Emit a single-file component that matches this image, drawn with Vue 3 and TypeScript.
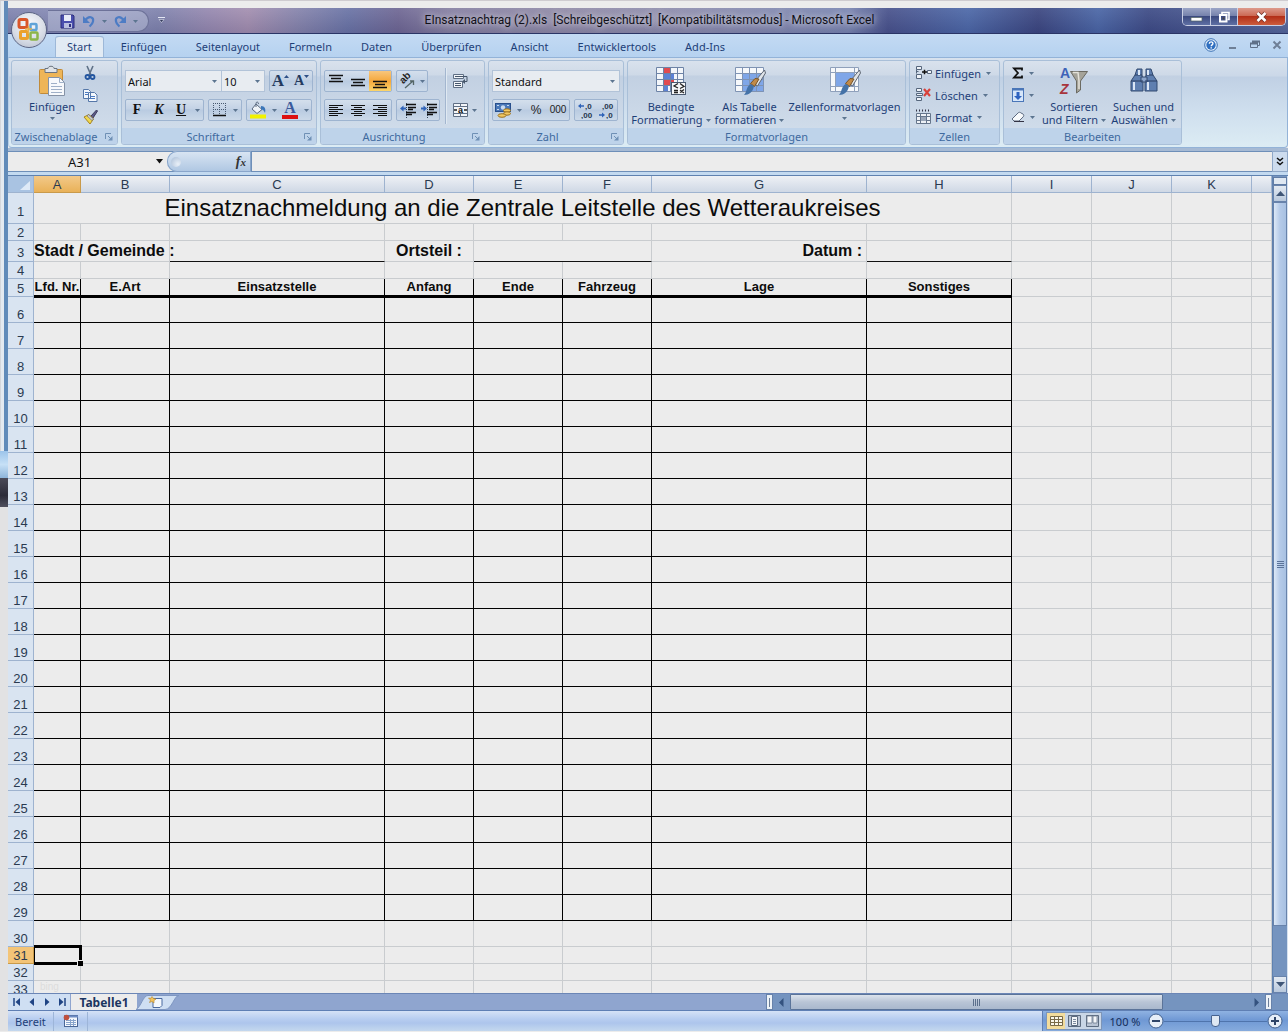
<script setup lang="ts">
import { h, ref } from 'vue'

const Caret = () =>
  h('svg', { class: 'caret', width: 5, height: 3, viewBox: '0 0 5 3', 'aria-hidden': 'true' }, [
    h('path', { d: 'M0 0h5L2.5 3z', fill: '#5c7590' }),
  ])

const Launcher = () =>
  h('svg', { width: 9, height: 9, viewBox: '0 0 9 9', 'aria-hidden': 'true' }, [
    h('path', { d: 'M1.5 7V1.5H7', stroke: '#6f90b5', fill: 'none' }),
    h('path', { d: 'M4 4l3 3', stroke: '#6f90b5', fill: 'none' }),
    h('path', { d: 'M8.500 4v4.500H4z', fill: '#6f90b5' }),
  ])

const tabs = ['Start', 'Einfügen', 'Seitenlayout', 'Formeln', 'Daten', 'Überprüfen', 'Ansicht', 'Entwicklertools', 'Add-Ins']
const activeTab = ref('Start')
const columns = ['A', 'B', 'C', 'D', 'E', 'F', 'G', 'H', 'I', 'J', 'K']
const headings = ['Lfd. Nr.', 'E.Art', 'Einsatzstelle', 'Anfang', 'Ende', 'Fahrzeug', 'Lage', 'Sonstiges']
const formRows = Array.from({ length: 24 }, (_, i) => i + 6)
const fontName = ref('Arial')
const fontSize = ref('10')
const numberFormat = ref('Standard')
const cellName = ref('A31')
const formula = ref('')
const zoom = ref(100)
const aligns = [
  { name: 'oben', path: 'M0 2.500h14M2 5.500h10M0 8.500h14' },
  { name: 'mittig', path: 'M0 6.500h14M2 9.500h10M0 12.500h14' },
  { name: 'unten', path: 'M0 8.500h14M2 11.500h10M0 14.500h14' },
]
</script>

<template>
  <div class="desktop">
    <div class="backdrop">
      <div class="edge"></div>
      <div class="glow"></div>
      <div class="shade"></div>
    </div>
    <div class="window">
      <header class="titlebar">
        <button class="office" aria-label="Office">
          <svg width="26" height="26" viewBox="0 0 26 26">
            <g fill="none" stroke-width="3">
              <rect x="3" y="2.500" width="8" height="8" rx="1.500" stroke="#d9562a" />
              <rect x="14.500" y="7" width="6" height="6" rx="1" stroke="#5fa3d8" stroke-width="2.500" />
              <rect x="4.500" y="14.500" width="7" height="7" rx="1" stroke="#eba12c" />
              <rect x="14.500" y="15.500" width="7" height="7" rx="1" stroke="#8cb54a" stroke-width="2.500" />
              <path d="M9 12h7M12.500 9v8" stroke="#e8b04a" stroke-width="1.500" />
            </g>
          </svg>
        </button>
        <div class="quick">
          <button aria-label="Speichern">
            <svg width="15" height="15" viewBox="0 0 15 15">
              <path d="M1 1h12l1 1v12H1z" fill="#4a4fae" stroke="#2d2f7c" />
              <rect x="4" y="1" width="7" height="6" fill="#e8ecf8" />
              <path d="M4 9h8v5H4z" fill="#b9bfe0" />
              <path d="M9 10h2v3H9z" fill="#2d2f7c" />
            </svg>
          </button>
          <button aria-label="Rückgängig">
            <svg width="14" height="13" viewBox="0 0 14 13">
              <path d="M3 5.500C7 0 12 2 11 6.500 10.500 9 9 10 7.500 11.500" fill="none" stroke="#4d7cc4" stroke-width="2.200" />
              <path d="M1 1v7h7z" fill="#4d7cc4" />
            </svg>
          </button>
          <button class="drop" aria-label="Rückgängig-Liste"><Caret /></button>
          <button aria-label="Wiederholen">
            <svg width="14" height="13" viewBox="0 0 14 13">
              <path d="M11 5.500C7 0 2 2 3 6.500 3.500 9 5 10 6.500 11.500" fill="none" stroke="#4d7cc4" stroke-width="2.200" />
              <path d="M13 1v7H6z" fill="#4d7cc4" />
            </svg>
          </button>
          <button class="drop" aria-label="Wiederholen-Liste"><Caret /></button>
        </div>
        <button class="customize" aria-label="Symbolleiste anpassen">
          <svg width="7" height="6" viewBox="0 0 7 6"><path d="M0 .5h7" stroke="#e4e8f4" /><path d="M1 2.500h5L3.500 5.500z" fill="#333a5c" stroke="#e4e8f4" stroke-width=".6" /></svg>
        </button>
        <h1 class="caption">EInsatznachtrag (2).xls&nbsp; [Schreibgeschützt]&nbsp; [Kompatibilitätsmodus] - Microsoft Excel</h1>
        <div class="winbuttons">
          <button class="min" aria-label="Minimieren">
            <svg width="13" height="12" viewBox="0 0 13 12"><rect x="1" y="6.500" width="11" height="3.500" fill="#fff" stroke="#566" stroke-width=".7" /></svg>
          </button>
          <button class="max" aria-label="Wiederherstellen">
            <svg width="13" height="12" viewBox="0 0 13 12"><path d="M4 3V1.500h7v7H9.500" fill="none" stroke="#fff" stroke-width="1.600" /><rect x="2" y="4" width="6.500" height="6.500" fill="none" stroke="#fff" stroke-width="2" /><rect x="4.500" y="6.500" width="2" height="2" fill="#444" /></svg>
          </button>
          <button class="close" aria-label="Schließen">
            <svg width="13" height="12" viewBox="0 0 13 12"><path d="M2.500 2l8 8M10.500 2l-8 8" stroke="#703028" stroke-width="4" /><path d="M2.500 2l8 8M10.500 2l-8 8" stroke="#fff" stroke-width="2.600" /></svg>
          </button>
        </div>
      </header>

      <nav class="tabs">
        <button v-for="t in tabs" :key="t" class="tab" :class="{ active: t === activeTab }" @click="activeTab = t">{{ t }}</button>
        <div class="docbuttons">
          <button aria-label="Hilfe">
            <svg width="14" height="14" viewBox="0 0 14 14"><circle cx="7" cy="7" r="6.300" fill="#e6f1fb" stroke="#3a70b4" /><circle cx="7" cy="7" r="4.700" fill="#2f6fc0" /><path d="M5.300 5.700C5.300 3.300 8.900 3.300 8.900 5.500 8.900 6.900 7.200 6.800 7.200 8.300M7.200 9.300v1.300" fill="none" stroke="#fff" stroke-width="1.400" /></svg>
          </button>
          <button aria-label="Mappe minimieren">
            <svg width="10" height="10" viewBox="0 0 10 10"><path d="M1 8h7" stroke="#6f7f96" stroke-width="2" /></svg>
          </button>
          <button aria-label="Mappe wiederherstellen">
            <svg width="10" height="10" viewBox="0 0 10 10"><path d="M2.500 4V1.500h7v4H8M.5 3.500h7v4h-7z" fill="none" stroke="#5f7088" /><path d="M0 3.500h8M2 1.500h8" stroke="#5f7088" stroke-width="2" /></svg>
          </button>
          <button aria-label="Mappe schließen">
            <svg width="10" height="10" viewBox="0 0 10 10"><path d="M1.500 1.500l7 7M8.500 1.500l-7 7" stroke="#6f7f96" stroke-width="2" /></svg>
          </button>
        </div>
      </nav>

      <section class="ribbon">
        <div class="group clip">
          <div class="body">
            <button class="big">
              <svg width="30" height="32" viewBox="0 0 30 32">
                <rect x="2.500" y="4.500" width="23" height="24" rx="1" fill="#eeb557" stroke="#c08a3a" />
                <path d="M8 3.500h3C11 .5 17 .5 17 3.500h3v4H8z" fill="#dfe3e8" stroke="#6b7480" />
                <path d="M11.500 12.500h11l5 5v13h-16z" fill="#f7f9fc" stroke="#8592a6" />
                <path d="M22.500 12.500v5h5M14 18.500h6M14 21.500h11M14 24.500h11M14 27.500h11" stroke="#9fb0c8" fill="none" />
              </svg>
              <span>Einfügen</span><Caret />
            </button>
            <div class="stack icons">
              <button aria-label="Ausschneiden"><svg width="16" height="16" viewBox="0 0 16 16"><path d="M5 1l4 9M11 1L7 10" stroke="#5f7187" stroke-width="1.600" /><circle cx="5.500" cy="12" r="2" fill="none" stroke="#23559f" stroke-width="1.800" /><circle cx="10.500" cy="12" r="2" fill="none" stroke="#23559f" stroke-width="1.800" /></svg></button>
              <button aria-label="Kopieren"><svg width="16" height="16" viewBox="0 0 16 16"><path d="M1.500 2.500h5l2 2v7h-7zM6.500 5.500h6l2.500 2.500v6.500H6.500z" fill="#f4f8fd" stroke="#5577a8" /><path d="M3 5.500h3M3 7.500h3M8 9.500h5M8 11.500h5" stroke="#4d7bc0" /></svg></button>
              <button aria-label="Format übertragen"><svg width="16" height="16" viewBox="0 0 16 16"><path d="M9 7l5.500-6 1 1L11 9z" fill="#5d5a86" stroke="#3b3a5c" /><path d="M2 8l5-2.500L11.500 10 8 15z" fill="#f0d84e" stroke="#a88420" /><path d="M6.500 5.500l5 4.500-1.500 1.500L5 7z" fill="#c9ccd6" stroke="#666" stroke-width=".6" /></svg></button>
            </div>
          </div>
          <footer><span>Zwischenablage</span><button class="launch" aria-label="Zwischenablage öffnen"><Launcher /></button></footer>
        </div>

        <div class="group font">
          <div class="body rows">
            <div class="line">
              <div class="combo-set">
                <label class="combo name"><select v-model="fontName" aria-label="Schriftart"><option>Arial</option></select><Caret /></label>
                <label class="combo size"><select v-model="fontSize" aria-label="Schriftgrad"><option>10</option></select><Caret /></label>
              </div>
              <div class="set">
                <button class="w21 serif grow" aria-label="Schriftart vergrößern">A<svg width="5" height="3" viewBox="0 0 5 3"><path d="M0 3h5L2.500 0z" fill="#2d4f86" /></svg></button>
                <button class="w21 serif shrink" aria-label="Schriftart verkleinern">A<svg width="5" height="3" viewBox="0 0 5 3"><path d="M0 0h5L2.500 3z" fill="#2d4f86" /></svg></button>
              </div>
            </div>
            <div class="line">
              <div class="set">
                <button class="w22 serif">F</button>
                <button class="w22 serif italic">K</button>
                <button class="w22 serif under">U</button>
                <button class="w11" aria-label="Unterstreichungsart"><Caret /></button>
              </div>
              <div class="set">
                <button class="w21" aria-label="Rahmen"><svg width="14" height="14" viewBox="0 0 14 14"><path d="M.5 0v13M6.500 0v13M12.500 0v13M0 .5h13M0 6.500h13" stroke="#47586f" stroke-dasharray="1 1" /><path d="M0 12.500h13" stroke="#111" stroke-width="1.500" /></svg></button>
                <button class="w11" aria-label="Rahmenart"><Caret /></button>
              </div>
              <div class="set">
                <button class="w22" aria-label="Füllfarbe"><svg width="18" height="18" viewBox="0 0 18 18"><path d="M7 3l6 5.500-5 4-5-4.500z" fill="#eef3f8" stroke="#5a6a80" /><path d="M7 6V2.500C7 .5 9.500.5 9.500 3" fill="none" stroke="#5a6a80" /><path d="M12 5c4 0 5 3 4 7-1-2-1.500-3.500-4-3.500z" fill="#3b76b8" /><rect x="1" y="13.500" width="16" height="4" fill="#f2f200" /></svg></button>
                <button class="w10" aria-label="Füllfarben"><Caret /></button>
                <button class="w22 fontcolor" aria-label="Schriftfarbe"><span>A</span><i></i></button>
                <button class="w10" aria-label="Schriftfarben"><Caret /></button>
              </div>
            </div>
          </div>
          <footer><span>Schriftart</span><button class="launch" aria-label="Schriftart öffnen"><Launcher /></button></footer>
        </div>

        <div class="group align">
          <div class="body">
            <div class="rows">
              <div class="line">
                <div class="set">
                  <button v-for="a in aligns" :key="a.name" class="w22" :class="{ on: a.name === 'unten' }" :aria-label="a.name">
                    <svg width="14" height="16" viewBox="0 0 14 16"><path :d="a.path" stroke="#111" stroke-width="1.400" /></svg>
                  </button>
                </div>
                <div class="set">
                  <button class="w20" aria-label="Ausrichtung"><svg width="18" height="18" viewBox="0 0 18 18"><text x="3" y="9" font-size="10" font-weight="bold" font-family="Liberation Sans, sans-serif" transform="rotate(-45 8 8)" fill="#222">ab</text><path d="M7 16l8-7M15.500 13V9H12" fill="none" stroke="#566" stroke-width="1.300" /></svg></button>
                  <button class="w10" aria-label="Ausrichtungsliste"><Caret /></button>
                </div>
              </div>
              <div class="line">
                <div class="set">
                  <button class="w22" aria-label="Linksbündig"><svg width="15" height="13" viewBox="0 0 15 13"><path d="M0 1.500h14M0 3.500h9M0 5.500h14M0 7.500h9M0 9.500h14M0 11.500h9" stroke="#111" /></svg></button>
                  <button class="w22" aria-label="Zentriert"><svg width="15" height="13" viewBox="0 0 15 13"><path d="M0 1.500h14M3 3.500h8M0 5.500h14M3 7.500h8M0 9.500h14M3 11.500h8" stroke="#111" /></svg></button>
                  <button class="w22" aria-label="Rechtsbündig"><svg width="15" height="13" viewBox="0 0 15 13"><path d="M0 1.500h14M5 3.500h9M0 5.500h14M5 7.500h9M0 9.500h14M5 11.500h9" stroke="#111" /></svg></button>
                </div>
                <div class="set">
                  <button class="w21" aria-label="Einzug verkleinern"><svg width="16" height="15" viewBox="0 0 16 15"><path d="M6 1.500h10M8 4.500h8M8 6.500h5M6 9.500h10M6 11.500h6" stroke="#111" stroke-width="1.600" /><path d="M6.500 0v15" stroke="#345" stroke-dasharray="1 1" /><path d="M0 5.500L3.500 2.500v2H6v2H3.500v2z" fill="#2f63b8" /></svg></button>
                  <button class="w21" aria-label="Einzug vergrößern"><svg width="16" height="15" viewBox="0 0 16 15"><path d="M6 1.500h10M8 4.500h8M8 6.500h5M6 9.500h10M6 11.500h6" stroke="#111" stroke-width="1.600" /><path d="M6.500 0v15" stroke="#345" stroke-dasharray="1 1" /><path d="M6 5.500L2.500 2.500v2H0v2h2.500v2z" fill="#2f63b8" /></svg></button>
                </div>
              </div>
            </div>
            <div class="divider"></div>
            <div class="rows">
              <button class="flat" aria-label="Zeilenumbruch"><svg width="17" height="16" viewBox="0 0 17 16"><path d="M1.500 1.500h10v4h-10zM1.500 8.500h9v6h-9z" fill="#f2f5f9" stroke="#5f6f85" /><path d="M3 3.500h12v5h-3M3 10.500h6M3 12.500h6" fill="none" stroke="#46566b" /><path d="M13 6l-3 2.500 3 2.500z" fill="#46566b" /></svg></button>
              <button class="flat" aria-label="Verbinden und zentrieren"><svg width="17" height="16" viewBox="0 0 17 16"><path d="M1.500 1.500h14v13h-14zM1.500 4.500h14M1.500 11.500h14M8.500 1v3M8.500 12v3" fill="#f2f5f9" stroke="#5f6f85" /><text x="6" y="10.500" font-size="9" font-weight="bold" font-family="Liberation Sans, sans-serif" fill="#111">a</text><path d="M2 8h3M12 8h3" stroke="#222" stroke-width="1.500" /></svg><Caret /></button>
            </div>
          </div>
          <footer><span>Ausrichtung</span><button class="launch" aria-label="Ausrichtung öffnen"><Launcher /></button></footer>
        </div>

        <div class="group number">
          <div class="body rows">
            <label class="combo format"><select v-model="numberFormat" aria-label="Zahlenformat"><option>Standard</option></select><Caret /></label>
            <div class="line">
              <div class="set">
                <button class="w21" aria-label="Buchhaltungsformat"><svg width="17" height="17" viewBox="0 0 17 17"><rect x=".5" y="1.500" width="15" height="8" fill="#4a78b8" stroke="#284f8c" /><circle cx="8" cy="5.500" r="2.200" fill="#c8daf0" /><path d="M2 3.500h2M12 3.500h2M2 7.500h2" stroke="#c8daf0" /><ellipse cx="12" cy="8.500" rx="3.500" ry="1.700" fill="#f2c862" stroke="#9a7224" /><ellipse cx="12" cy="11.500" rx="3.500" ry="1.700" fill="#f2c862" stroke="#9a7224" /><ellipse cx="7" cy="13.500" rx="4" ry="1.800" fill="#f2c862" stroke="#9a7224" /></svg></button>
                <button class="w11" aria-label="Währungen"><Caret /></button>
                <button class="w22 sym">%</button>
                <button class="w22 sym zeros">000</button>
              </div>
              <div class="set">
                <button class="w21" aria-label="Dezimalstelle hinzufügen"><svg width="17" height="18" viewBox="0 0 17 18"><text x="8" y="8" font-size="8" font-weight="bold" font-family="Liberation Sans, sans-serif" fill="#26364c">,0</text><text x="4" y="17" font-size="8" font-weight="bold" font-family="Liberation Sans, sans-serif" fill="#26364c">,00</text><path d="M1 5L4 2.500v1.800h3v1.500H4v1.700z" fill="#2f63b8" /></svg></button>
                <button class="w21" aria-label="Dezimalstelle löschen"><svg width="17" height="18" viewBox="0 0 17 18"><text x="4" y="8" font-size="8" font-weight="bold" font-family="Liberation Sans, sans-serif" fill="#26364c">,00</text><text x="8" y="17" font-size="8" font-weight="bold" font-family="Liberation Sans, sans-serif" fill="#26364c">,0</text><path d="M7 14l-3-2.500v1.800H1v1.500h3v1.700z" fill="#2f63b8" /></svg></button>
              </div>
            </div>
          </div>
          <footer><span>Zahl</span><button class="launch" aria-label="Zahl öffnen"><Launcher /></button></footer>
        </div>

        <div class="group styles">
          <div class="body">
            <button class="big cond">
              <svg width="30" height="32" viewBox="0 0 30 32">
                <path d="M.5 2.500h27v24H.5z" fill="#f3f6fa" />
                <path d="M7 2h7v6H7zM7 14h11v6H7z" fill="#e04a50" /><path d="M7 8h11v6H7zM7 20h5v6H7z" fill="#5b82d6" />
                <path d="M.5 2.500h27v24H.5zM.5 8.500h27M.5 14.500h27M.5 20.500h27M7.500 2v24M14.500 2v24M21.500 2v24" fill="none" stroke="#6d83a6" />
                <rect x="15.500" y="17.500" width="14" height="12" fill="#f7f8fa" stroke="#4b5a70" />
                <path d="M22 18.500l-4 2.500 4 2M18 25.500h4M18 27.500h4M24 18.500l4 3-4 2M24 25l4 3M28 24.500l-4 3" fill="none" stroke="#222" stroke-width="1.300" />
              </svg>
              <span>Bedingte</span><span>Formatierung <Caret /></span>
            </button>
            <button class="big tbl">
              <svg width="32" height="32" viewBox="0 0 32 32">
                <path d="M1.500 2.500h28v24h-28z" fill="#f6f8fb" /><path d="M8 8h22v19H8z" fill="#7fa6e8" />
                <path d="M1.500 2.500h28v24h-28zM1.500 8.500h28M1.500 14.500h28M1.500 20.500h28M8.500 2v24M15.500 2v24M22.500 2v24" fill="none" stroke="#7f93b3" />
                <path d="M30.500 5l1 3-8 13-4-3z" fill="#dfe3e8" stroke="#5e6672" /><path d="M25 14l-4.500 7.500-4-3 4.500-5z" fill="#c08a4a" stroke="#7a5426" /><path d="M20 21c-1 6-5 9-10 9 3-3 2-8 6.500-11z" fill="#4472a8" />
              </svg>
              <span>Als Tabelle</span><span>formatieren <Caret /></span>
            </button>
            <button class="big cell">
              <svg width="32" height="32" viewBox="0 0 32 32">
                <path d="M1.500 2.500h28v24h-28z" fill="#f6f8fb" /><path d="M6 7h19v15H6z" fill="#7fa6e8" />
                <path d="M1.500 2.500h28v24h-28zM1.500 7.500h28M1.500 21.500h28M6.500 2v24M25.500 2v24" fill="none" stroke="#8fa0bb" />
                <path d="M30.500 5l1 3-8 13-4-3z" fill="#dfe3e8" stroke="#5e6672" /><path d="M25 14l-4.500 7.500-4-3 4.500-5z" fill="#c08a4a" stroke="#7a5426" /><path d="M20 21c-1 6-5 9-10 9 3-3 2-8 6.500-11z" fill="#4472a8" />
              </svg>
              <span>Zellenformatvorlagen</span><Caret />
            </button>
          </div>
          <footer><span>Formatvorlagen</span></footer>
        </div>

        <div class="group cells">
          <div class="body">
            <div class="stack">
              <button class="entry"><svg width="17" height="16" viewBox="0 0 17 16"><path d="M1.500 1.500h5v3h-5zM1.500 4.500v4M1.500 9.500h5v4h-5zM1.500 6.500h2M12.500 5.500h4v3h-4z" fill="#f0f3f8" stroke="#56667c" /><path d="M7 7h5M9.500 4.800v4.400" stroke="#111" stroke-width="1.500" /></svg>Einfügen<Caret /></button>
              <button class="entry"><svg width="17" height="16" viewBox="0 0 17 16"><path d="M1.500 1.500h5v3h-5zM1.500 10.500h5v3h-5zM1.500 6.500h6v2h-6z" fill="#f0f3f8" stroke="#56667c" /><path d="M9 2l6 7M15 2L9 9" stroke="#d8413a" stroke-width="2.200" /></svg>Löschen<Caret /></button>
              <button class="entry"><svg width="17" height="16" viewBox="0 0 17 16"><path d="M1.500 4.500h14v10h-14zM1.500 7.500h14M1.500 11.500h14M5.500 4v10M11.500 4v10" fill="#eef1f6" stroke="#66768c" /><path d="M6 8h5v4H6z" fill="#9aa6b8" /><path d="M1 1.500h15" stroke="#334" stroke-width="2" stroke-dasharray="1 2" /></svg>Format<Caret /></button>
            </div>
          </div>
          <footer><span>Zellen</span></footer>
        </div>

        <div class="group edit">
          <div class="body">
            <div class="stack">
              <button class="entry" aria-label="Summe"><svg width="14" height="14" viewBox="0 0 14 14"><path d="M11 4.500V2.500H3l4 4.500-4 4.500h8v-2" fill="none" stroke="#111" stroke-width="1.800" /></svg><Caret /></button>
              <button class="entry" aria-label="Füllbereich"><svg width="14" height="16" viewBox="0 0 14 16"><rect x="1.500" y="1.500" width="11" height="13" fill="#d6e6fa" stroke="#4a76b8" /><path d="M1 2.500h12" stroke="#4a76b8" stroke-width="2" /><path d="M7 13L3 9h2.500V5h3v4H11z" fill="#2f63c0" /></svg><Caret /></button>
              <button class="entry" aria-label="Löschen"><svg width="15" height="14" viewBox="0 0 15 14"><path d="M1 9l6-6c1-1 2-1 3 0l2 1c1 1 1 2 0 3l-4 4H3z" fill="#f8fafc" stroke="#5c6a80" /><path d="M3 11.500h10" stroke="#334" /></svg><Caret /></button>
            </div>
            <button class="big sort">
              <svg width="32" height="32" viewBox="0 0 32 32">
                <text x="2" y="13" font-size="14" font-weight="bold" font-family="Liberation Sans, sans-serif" fill="#3f63b8">A</text>
                <text x="2" y="29" font-size="14" font-weight="bold" font-style="italic" font-family="Liberation Sans, sans-serif" fill="#a8353c">Z</text>
                <path d="M12.500 6.500h17l-7 9.500v9l-4 3V16z" fill="#a5a399" stroke="#6b6a62" /><path d="M15 7.500h5l1 8.500v8" fill="none" stroke="#e4e2da" stroke-width="1.500" />
              </svg>
              <span>Sortieren</span><span>und Filtern <Caret /></span>
            </button>
            <button class="big find">
              <svg width="30" height="32" viewBox="0 0 30 32">
                <path d="M8 4h5v6l1 5v11H2V16l4-6zM17 4h5l2 6 4 6v10H16V15l1-5z" fill="#5f7fb0" stroke="#334a70" />
                <path d="M12 12h6v5h-6z" fill="#8ba4cb" stroke="#334a70" /><path d="M2 16h12M16 16h12M6 10h7M17 10h7" stroke="#2b3f63" /><path d="M5 17v8M19 17v8M10 5v5M19 5v5" stroke="#dbe6f5" stroke-width="2" />
              </svg>
              <span>Suchen und</span><span>Auswählen <Caret /></span>
            </button>
          </div>
          <footer><span>Bearbeiten</span></footer>
        </div>
      </section>

      <div class="formulabar">
        <input v-model="cellName" class="namebox" aria-label="Namenfeld" />
        <button class="namedrop" aria-label="Namen"><svg width="7" height="5" viewBox="0 0 7 5"><path d="M0 0h7L3.500 4.500z" fill="#111" /></svg></button>
        <div class="fx"><span class="knob"></span><button aria-label="Funktion einfügen"><i>f</i><sub>x</sub></button></div>
        <input v-model="formula" class="formula" aria-label="Bearbeitungsleiste" />
        <button class="expand" aria-label="Bearbeitungsleiste erweitern"><svg width="8" height="9" viewBox="0 0 8 9"><path d="M1 1l3 2.500L7 1M1 5l3 2.500L7 5" fill="none" stroke="#111" stroke-width="1.500" /></svg></button>
      </div>

      <main class="workspace">
        <div class="sheet">
          <table>
            <colgroup>
              <col class="c-row" /><col class="c-a" /><col class="c-s" /><col class="c-l" /><col class="c-s" /><col class="c-s" /><col class="c-s" /><col class="c-l" /><col class="c-h" /><col class="c-x" /><col class="c-x" /><col class="c-x" /><col />
            </colgroup>
            <thead>
              <tr>
                <th class="corner"><svg width="10" height="9" viewBox="0 0 10 9"><path d="M10 0v9H0z" fill="#dfeaf7" /></svg></th>
                <th v-for="c in columns" :key="c" :class="{ sel: c === 'A' }">{{ c }}</th>
                <th></th>
              </tr>
            </thead>
            <tbody>
              <tr class="r31"><th>1</th><td colspan="8" class="title">Einsatznachmeldung an die Zentrale Leitstelle des Wetteraukreises</td><td v-for="n in 4" :key="n"></td></tr>
              <tr class="r17"><th>2</th><td v-for="n in 12" :key="n"></td></tr>
              <tr class="r21">
                <th>3</th>
                <td colspan="2" class="field">Stadt / Gemeinde :</td><td class="fill"></td>
                <td class="field mid">Ortsteil :</td><td colspan="2" class="fill"></td>
                <td class="field date">Datum :</td><td class="fill"></td>
                <td v-for="n in 4" :key="n"></td>
              </tr>
              <tr class="r17"><th>4</th><td v-for="n in 12" :key="n"></td></tr>
              <tr class="r18"><th>5</th><td v-for="t in headings" :key="t" class="heading">{{ t }}</td><td v-for="n in 4" :key="n"></td></tr>
              <tr v-for="r in formRows" :key="r" class="r26" :class="{ first: r === 6 }">
                <th>{{ r }}</th><td v-for="n in 8" :key="n" class="box"></td><td v-for="n in 4" :key="n + 8"></td>
              </tr>
              <tr class="r26"><th>30</th><td v-for="n in 12" :key="n"></td></tr>
              <tr class="r17"><th class="sel">31</th><td class="cursor"><i></i></td><td v-for="n in 11" :key="n"></td></tr>
              <tr class="r17"><th>32</th><td v-for="n in 12" :key="n"></td></tr>
              <tr class="r17"><th>33</th><td class="mark">bing</td><td v-for="n in 11" :key="n"></td></tr>
            </tbody>
          </table>
        </div>
        <div class="vscroll">
          <div class="split"></div>
          <button class="arrow" aria-label="Nach oben"><svg width="9" height="5" viewBox="0 0 9 5"><path d="M0 5h9L4.500 0z" fill="#3f5677" /></svg></button>
          <div class="thumb"><i></i><i></i><i></i><i></i></div>
          <div class="rest"></div>
          <button class="arrow" aria-label="Nach unten"><svg width="9" height="5" viewBox="0 0 9 5"><path d="M0 0h9L4.500 5z" fill="#3f5677" /></svg></button>
        </div>
      </main>

      <div class="sheetbar">
        <div class="navs">
          <button aria-label="Erstes Blatt"><svg width="8" height="8" viewBox="0 0 8 8"><path d="M1 0v8" stroke="#1f4484" stroke-width="1.500" /><path d="M7 0v8L2.500 4z" fill="#1f4484" /></svg></button>
          <button aria-label="Vorheriges Blatt"><svg width="8" height="8" viewBox="0 0 8 8"><path d="M6 0v8L1.500 4z" fill="#1f4484" /></svg></button>
          <button aria-label="Nächstes Blatt"><svg width="8" height="8" viewBox="0 0 8 8"><path d="M2 0v8l4.500-4z" fill="#1f4484" /></svg></button>
          <button aria-label="Letztes Blatt"><svg width="8" height="8" viewBox="0 0 8 8"><path d="M7 0v8" stroke="#1f4484" stroke-width="1.500" /><path d="M1 0v8l4.500-4z" fill="#1f4484" /></svg></button>
        </div>
        <button class="sheettab">Tabelle1</button>
        <button class="newtab" aria-label="Tabellenblatt einfügen">
          <svg width="46" height="15" viewBox="0 0 46 15"><path d="M1 14.500C6 12 8 .5 13 .5h31C39 .5 37 14.500 30 14.500z" fill="#cfdff3" stroke="#7f97c2" /><path d="M18 3.500h9v7l-2 2h-7z" fill="#f4f8fd" stroke="#49699f" /><path d="M17 1.500l1.500 2 2.500.5-2 1.500v2.500L17 6.500 14.500 7.500l1-2.500L13.500 3l2.500.3z" fill="#f2c25a" stroke="#b4842c" stroke-width=".6" /></svg>
        </button>
        <span class="gap"></span>
        <div class="hscroll">
          <i class="splitter"></i>
          <button aria-label="Nach links"><svg width="5" height="9" viewBox="0 0 5 9"><path d="M4.500 0v9L0 4.500z" fill="#34527f" /></svg></button>
          <div class="hthumb"><i></i><i></i><i></i><i></i></div>
          <span class="htrack"></span>
          <button aria-label="Nach rechts"><svg width="5" height="9" viewBox="0 0 5 9"><path d="M.5 0v9L5 4.500z" fill="#34527f" /></svg></button>
          <i class="splitter"></i>
        </div>
      </div>

      <footer class="status">
        <span class="ready">Bereit</span>
        <button class="macro" aria-label="Makro aufzeichnen"><svg width="16" height="14" viewBox="0 0 16 14"><rect x="1.500" y="1.500" width="13" height="11" fill="#f5f8fc" stroke="#4a6696" /><path d="M1 2.500h14" stroke="#6d8cc4" stroke-width="2" /><path d="M3 6.500h10M3 8.500h10M3 10.500h10M7.500 5v7M10.500 5v7" stroke="#88a4cc" /><circle cx="3.500" cy="3.500" r="2.800" fill="#c0503e" /></svg></button>
        <span class="gap"></span>
        <div class="controls">
          <div class="views">
            <button class="on" aria-label="Normal"><svg width="15" height="12" viewBox="0 0 15 12"><path d="M1.500 1.500h12v9h-12zM1 4.500h13M1 7.500h13M5.500 1v10M9.500 1v10" fill="#fbf8ec" stroke="#7a6b48" /></svg></button>
            <button aria-label="Seitenlayout"><svg width="13" height="12" viewBox="0 0 13 12"><path d="M.5.5h12v11H.5z" fill="#b9c4d4" stroke="#5c6b80" /><path d="M3.500 1.500h6v9h-6z" fill="#f4f6f9" stroke="#5c6b80" /><path d="M5 4.500h3M5 6.500h3M5 8.500h3" stroke="#7c8a9e" /></svg></button>
            <button aria-label="Umbruchvorschau"><svg width="13" height="12" viewBox="0 0 13 12"><path d="M.5.5h12v11H.5z" fill="#b9c4d4" stroke="#5c6b80" /><path d="M1 1h5v7H1zM7 1h4v7H7z" fill="#f4f6f9" stroke="#6c7b90" stroke-width=".8" /></svg></button>
          </div>
          <button class="percent">{{ zoom }} %</button>
          <button class="round" aria-label="Verkleinern"><svg width="16" height="16" viewBox="0 0 16 16"><circle cx="8" cy="8" r="7" fill="#e6eef8" stroke="#3f5f8e" /><path d="M4 8h8" stroke="#2e4468" stroke-width="2" /></svg></button>
          <input v-model.number="zoom" type="range" min="10" max="190" aria-label="Zoom" />
          <button class="round" aria-label="Vergrößern"><svg width="16" height="16" viewBox="0 0 16 16"><circle cx="8" cy="8" r="7" fill="#e6eef8" stroke="#3f5f8e" /><path d="M4 8h8M8 4v8" stroke="#2e4468" stroke-width="2" /></svg></button>
        </div>
      </footer>
    </div>
  </div>
</template>

<style>
body { background: #ececec; }
</style>

<style scoped>
* { box-sizing: border-box; }
.desktop {
  display: flex;
  height: 100vh;
  padding: 0 0 1px;
  overflow: hidden;
  background: #ececec;
  font: 11px/13px "Noto Sans", "Open Sans", sans-serif;
  color: #1e3f78;
  border-top: 1px solid #cfccd0;
}
button, select, input { font: inherit; color: inherit; margin: 0; padding: 0; border: 0; background: none; border-radius: 0; outline: 0; }
button { display: flex; align-items: center; justify-content: center; white-space: nowrap; }
svg { flex: none; display: block; }
.backdrop { flex: 0 0 8px; display: flex; flex-direction: column; background: #e2e2e3; }
.edge { flex: 0 0 450px; background: linear-gradient(90deg, #d4d6da 0 1px, #e4eaf0 1px 4px, #618bb9 4px); }
.glow { flex: 0 0 27px; background: linear-gradient(#9cc4ea, #c6e0f6, #8db4da); }
.shade { flex: 0 0 29px; background: linear-gradient(#4a4a58, #2c2c3a 60%, #50505e); }
.window { flex: 1; min-width: 0; display: flex; flex-direction: column; padding-top: 7px; }

.titlebar {
  position: relative;
  flex: 0 0 26px;
  display: flex;
  align-items: flex-start;
  border-bottom: 1px solid #2a3566;
  background:
    linear-gradient(180deg, rgba(255, 255, 255, .08), rgba(20, 20, 60, .12)),
    linear-gradient(90deg, #8085b0 0, #8c90ba 90px, #8084ae 150px, #9689b0 200px, #a48fb0 240px, #8684ac 290px, #6a74a6 340px, #6f6794 390px, #8680a2 440px, #918ba8 560px, #8d8dae 680px, #7a86b2 840px, #48528c 880px, #4c68a8 960px, #3b4680 1030px, #4a66a6 1090px, #3d4b86 1140px, #56689c);
}
.office {
  position: absolute; left: 3px; top: 4px; width: 36px; height: 36px; border-radius: 50%;
  background: radial-gradient(circle at 50% 35%, #fafbfd, #d5dae4 60%, #b0b8ca); border: 1px solid #5d6685; z-index: 2;
}
.quick { display: flex; align-items: center; height: 22px; margin: 2px 0 0 40px; padding-left: 10px; width: 101px; border: 1px solid #6d7299; border-left: 0; border-radius: 0 12px 12px 0; background: rgba(196, 202, 224, .45); }
.quick button { width: 18px; }
.quick button:first-child { margin-right: 4px; }
.quick .drop { width: 13px; }
.customize { width: 24px; height: 24px; }
.caption { flex: 1; margin: 0 56px 0 0; font: 12px/25px Roboto, "Noto Sans", sans-serif; text-align: center; color: #101018; white-space: nowrap; text-shadow: 0 0 6px rgba(255, 255, 255, .7), 0 0 10px rgba(255, 255, 255, .5); }
.winbuttons { display: flex; height: 18px; margin-right: 2px; border: 1px solid #c9cfe4; border-top: 0; border-radius: 0 0 5px 5px; overflow: hidden; }
.winbuttons button { background: linear-gradient(#9ba5c6, #7682ac 45%, #3c4a80 50%, #5f70a4); }
.min { width: 28px; border-right: 1px solid #c9cfe4; }
.max { width: 27px; border-right: 1px solid #c9cfe4; }
.winbuttons .close { width: 47px; background: linear-gradient(#dd9a8c, #cc6a55 45%, #b32f18 50%, #cc5c3c); }

.tabs { flex: 0 0 23px; display: flex; align-items: flex-end; gap: 5px; padding-left: 47px; background: linear-gradient(#c3daf3, #b6d2f0); }
.tab { height: 21px; padding: 0 12px 2px; border: 1px solid transparent; border-width: 1px 0 0; border-radius: 3px 3px 0 0; }
.tab.active { background: #e2ebf4; border-color: #9db8d8; box-shadow: inset 1px 0 #9db8d8, inset -1px 0 #9db8d8; }
.docbuttons { margin-left: auto; display: flex; align-items: center; gap: 12px; height: 23px; padding: 0 6px 2px 0; }
.docbuttons button:first-child { margin-right: -2px; }

.ribbon {
  flex: none; display: flex; gap: 3px; padding: 2px; border: 1px solid #93b3d8; border-left-color: #b7cfe8; border-radius: 0 0 4px 4px;
  background: linear-gradient(#d8e2ee, #cbd8e8 18px, #c0d0e4 19px, #cfdfee 60%, #dcecf4);
}
.group { display: flex; flex-direction: column; border: 1px solid #a9bfd8; border-radius: 3px; height: 85px; background: linear-gradient(#d9e2ed, #ced9e7 14px, #c2d0e2 15px, #d3dfec); }
.clip { width: 107px; } .font { width: 196px; } .align { width: 165px; } .number { width: 136px; } .styles { width: 279px; } .cells { width: 91px; } .edit { width: 179px; }
.body { flex: 1; display: flex; min-height: 0; }
.group footer { flex: 0 0 16px; display: flex; align-items: center; background: #bed3ea; color: #3f6a9f; border-radius: 0 0 2px 2px; }
.group footer span { flex: 1; text-align: center; white-space: nowrap; }
.launch { width: 17px; height: 14px; }
.rows { display: flex; flex-direction: column; gap: 7px; }
.body.rows, .align .body { padding: 9px 0 0 3px; }
.line { display: flex; gap: 4px; }
.set { display: flex; height: 22px; border: 1px solid #9eb4d0; border-radius: 2px; background: linear-gradient(#d4dfec, #c3d2e5 45%, #b9cbe1 50%, #cbd9e9); }
.set button { height: 20px; }
.w10 { width: 10px; } .w11 { width: 11px; } .w20 { width: 20px; } .w21 { width: 21px; } .w22 { width: 22px; }
.on { background: linear-gradient(#f8c67c, #f5a83c 50%, #fbd56a); }
.serif { font: bold 14px/20px "Liberation Serif", serif; color: #111; }
.italic { font-style: italic; }
.under { text-decoration: underline; }
.grow, .shrink { align-items: flex-start; color: #233a5e; }
.grow { font-size: 17px; }
.grow svg, .shrink svg { margin-top: 4px; }
.fontcolor { flex-direction: column; font: bold 16px/14px "Liberation Serif", serif; color: #3b5a9c; }
.fontcolor i { width: 16px; height: 4px; background: #dd1010; }
.sym { font: 12px/20px "Liberation Sans", sans-serif; color: #222; }
.zeros { font-size: 10px; }
.combo-set { display: flex; }
.combo { display: flex; align-items: center; height: 22px; border: 1px solid #b2c3d8; background: #e8ecf1; padding-right: 4px; }
.combo select { appearance: none; flex: 1; min-width: 0; height: 20px; padding-left: 2px; color: #111; }
.name { width: 97px; } .size { width: 43px; border-left: 0; } .format { width: 128px; }
.divider { width: 1px; height: 56px; margin: -2px 6px 0 5px; background: #a3b6cf; box-shadow: 1px 0 #e0e9f2; }
.flat { height: 22px; gap: 3px; justify-content: flex-start; }

.big { flex-direction: column; justify-content: flex-start; padding-top: 4px; line-height: 13px; }
.big svg:first-child { margin-bottom: 3px; }
.big .caret { margin-top: 4px; }
.big span { display: flex; align-items: center; gap: 3px; height: 13px; }
.big span .caret { margin: 1px 0 0; }
.clip .body { padding-left: 12px; }
.clip .big { width: 56px; }
.stack { display: flex; flex-direction: column; padding-top: 1px; }
.stack button { height: 22px; justify-content: flex-start; gap: 3px; }
.icons { padding-left: 2px; }
.cond { width: 80px; margin-left: 3px; } .tbl { width: 77px; } .cell { width: 113px; }
.cells .stack { padding-left: 5px; }
.cells .caret { margin-left: 2px; }
.edit .stack { padding-left: 7px; width: 36px; }
.edit .entry { gap: 4px; }
.sort { width: 68px; } .find { width: 71px; }

.formulabar { flex: 0 0 27px; display: flex; border-top: 3px solid #a6bad4; border-bottom: 3px solid #c3daf0; background: #ececec; color: #111; box-shadow: inset 0 1px #6e8fb8, inset 0 -1px #6e8fb8; }
.namebox { width: 143px; text-align: center; font-size: 13px; height: 21px; }
.namedrop { width: 16px; }
.fx { width: 85px; display: flex; align-items: center; justify-content: space-between; padding: 0 5px 0 4px; border-radius: 10px 0 0 10px; border-right: 1px solid #6e8fb8; background: linear-gradient(#dae6f3, #aec6e2); box-shadow: inset 0 0 0 1px #89a6cb; }
.knob { width: 10px; height: 10px; border-radius: 50%; background: radial-gradient(circle at 70% 70%, #e9f0f8, #a9bdd6); }
.fx button { font: bold 14px/16px "Liberation Serif", serif; color: #333; height: 19px; }
.fx sub { font-size: 11px; line-height: 12px; font-style: italic; }
.formula { flex: 1; min-width: 0; font-size: 12px; }
.expand { width: 16px; border: 1px solid #8fa8c8; background: #cddcee; }

.workspace { flex: 1; min-height: 0; display: flex; border-top: 1px solid #5f82b0; }
.sheet { flex: 1; min-width: 0; overflow: hidden; font-family: "Liberation Sans", Arial, sans-serif; color: #0c0c0c; }
table { width: 100%; table-layout: fixed; border-collapse: separate; border-spacing: 0; }
.c-row { width: 26px; } .c-a { width: 47px; } .c-s { width: 89px; } .c-l { width: 215px; } .c-h { width: 145px; } .c-x { width: 80px; }
td, th { padding: 0; border: 0 solid #c9cccf; border-width: 0 1px 1px 0; white-space: nowrap; line-height: 15px; }
th { font-size: 13px; font-weight: 400; color: #2a3a50; vertical-align: bottom; border-color: #9eb3cf; background: #d9e4f1; }
thead th { height: 17px; vertical-align: middle; background: linear-gradient(#eef1f5, #cfd8e5); }
thead th.corner { background: #a9c3e2; }
.corner svg { margin: 3px 3px 0 auto; }
thead th.sel { background: linear-gradient(#f2c98a, #e9b158); }
th.sel { background: #f3c477; border-color: #c99a4a; }
.r31 > * { height: 31px; } .r17 > * { height: 17px; } .r21 > * { height: 21px; } .r18 > * { height: 18px; } .r26 > * { height: 26px; }
.r31 th { padding-bottom: 4px; }
.r21 th { padding-bottom: 1px; }
.title { font-size: 24px; line-height: 28px; text-align: center; vertical-align: middle; }
.field { font-size: 16px; line-height: 18px; font-weight: 700; text-align: right; }
.field.mid { text-align: center; }
.field.date { padding-right: 4px; }
.fill { border-bottom-color: #111; }
.heading { font-size: 13px; line-height: 14px; font-weight: 700; text-align: center; border-right-color: #000; border-bottom: 2px solid #000; }
.box { border-color: #000; }
.first .box { border-top: 1px solid #000; }
.cursor { position: relative; }
.cursor::before { content: ""; position: absolute; inset: -2px -2px -2px 0; border: 3px solid #000; border-left-width: 1px; }
.cursor i { position: absolute; right: -3px; bottom: -3px; width: 6px; height: 6px; background: #000; border: 1px solid #ececec; border-width: 1px 0 0 1px; }
.mark { font-size: 10px; line-height: 11px; color: #dcdcdc; padding-left: 6px; vertical-align: top; }

.vscroll { flex: 0 0 16px; display: flex; flex-direction: column; background: #7594bf; border-left: 1px solid #5f82b0; border-right: 1px solid #d6e2f0; }
.split { height: 8px; margin-top: 1px; border: 1px solid #5f7ca6; background: #dfe8f2; }
.arrow { height: 17px; background: linear-gradient(#e3eaf2, #b8c8dc); border: 1px solid #6883ab; }
.thumb { flex: 725 0 0; display: flex; flex-direction: column; align-items: center; justify-content: center; gap: 1px; background: linear-gradient(90deg, #dce8f6, #b4cae8 50%, #a8c1e2); border: 1px solid #6883ab; }
.thumb i { width: 7px; height: 1px; background: #5b7499; }
.rest { flex: 50 0 0; }

.sheetbar { flex: 0 0 17px; display: flex; background: #8fa5cf; border-top: 1px solid #6b86b6; }
.navs { display: flex; width: 63px; background: #cfdff3; border-right: 1px solid #8fa5cf; padding-left: 1px; }
.navs button { width: 15px; }
.sheettab { width: 66px; background: #ececec; font-size: 12px; font-weight: 700; color: #1b3560; }
.newtab { width: 46px; margin-left: -2px; }
.gap { flex: 1; }
.hscroll { flex: 0 0 522px; display: flex; background: #7594bf; padding-right: 16px; }
.hscroll button { width: 17px; }
.splitter { width: 7px; background: #eef3f8 linear-gradient(#6d7f99, #6d7f99) center / 1px 9px no-repeat; border: 1px solid #6883ab; }
.hthumb { flex: 373 0 0; display: flex; align-items: center; justify-content: center; gap: 1px; border: 1px solid #5b7499; border-radius: 1px; background: linear-gradient(#dce3ec, #b9c5d6 50%, #a9b8cd); }
.hthumb i { width: 1px; height: 7px; background: #5b6f8c; }
.htrack { flex: 85 0 0; }

.status { flex: 0 0 21px; display: flex; align-items: center; border-top: 1px solid #5f7fb4; background: linear-gradient(#d5e2f6, #b7cdf0 40%, #adc5ec 60%, #c4d8ee); }
.ready { width: 46px; padding-left: 7px; border-right: 1px solid #9db5d8; line-height: 19px; }
.macro { width: 34px; height: 19px; border-right: 1px solid #9db5d8; }
.controls { display: flex; align-items: center; align-self: stretch; width: 246px; padding-left: 3px; border-left: 1px solid #5f7fb4; background: linear-gradient(#8fb2e2, #6f98d4 45%, #86abdd); }
.views { display: flex; border: 1px solid #7d95b8; background: #c9d6e6; }
.views button { width: 18px; height: 16px; }
.views .on { background: #f3dc9c; }
.percent { width: 46px; color: #142e5c; }
.round { width: 16px; }
.controls input { appearance: none; flex: 1; min-width: 0; height: 16px; background: linear-gradient(#4f74ac, #4f74ac) center / 100% 1px no-repeat; }
.controls input::-webkit-slider-thumb { appearance: none; width: 9px; height: 12px; background: #dfe8f3; border: 1px solid #46628f; border-radius: 1px 1px 4px 4px; }
.round:last-child { margin-right: 5px; }
</style>
